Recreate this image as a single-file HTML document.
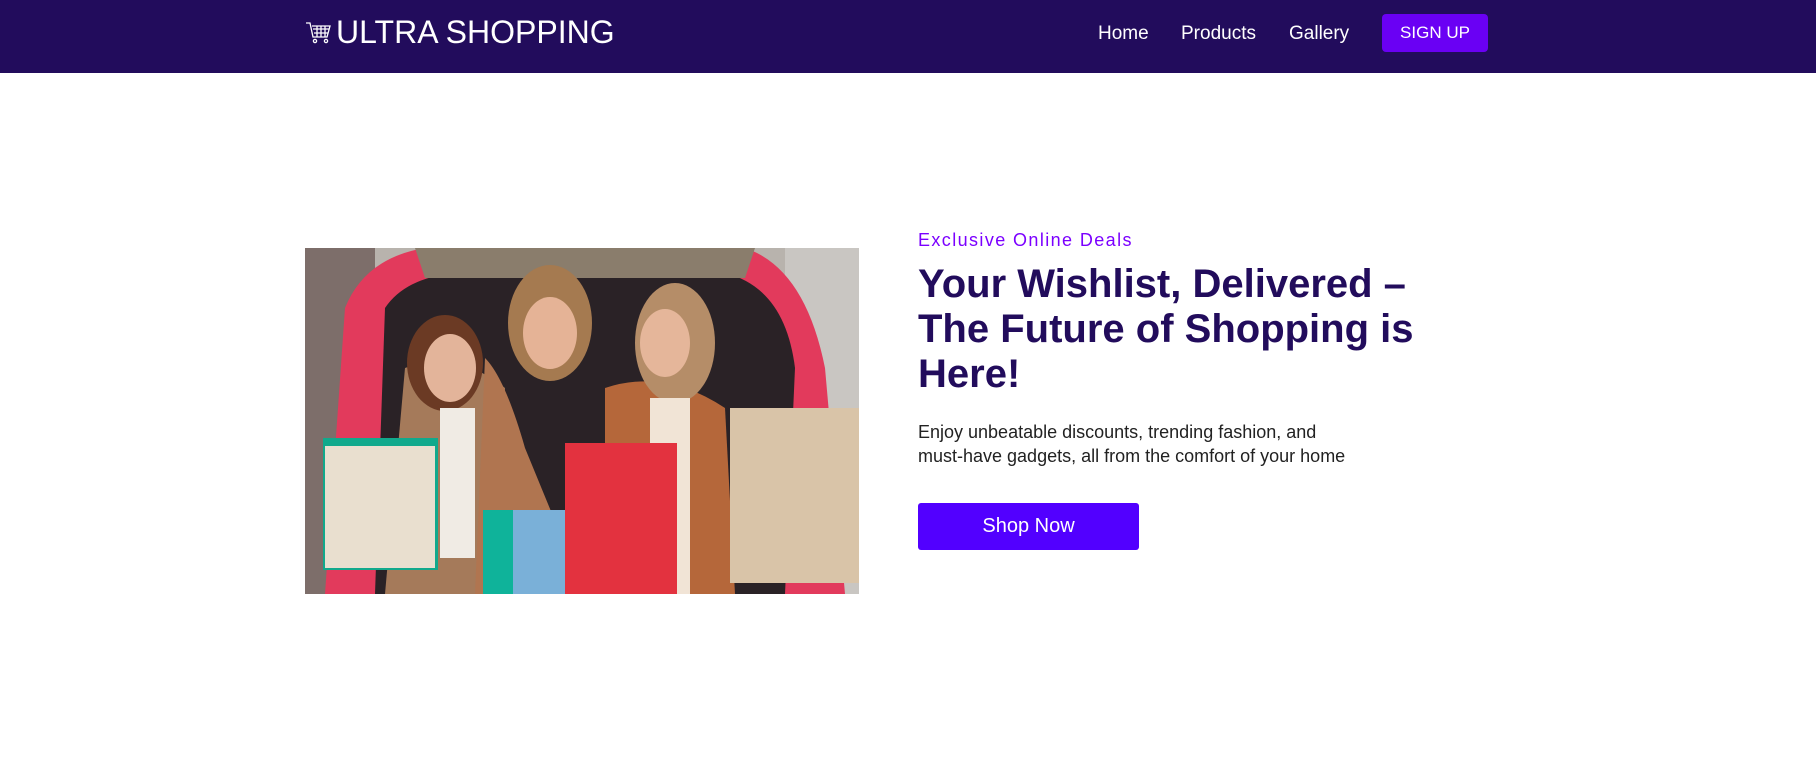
<!DOCTYPE html>
<html><head><meta charset="utf-8"><style>
*{margin:0;padding:0;box-sizing:border-box}
body{width:1816px;height:770px;background:#fff;font-family:"Liberation Sans",sans-serif;overflow:hidden;position:relative}
nav{position:absolute;left:0;top:0;width:1816px;height:73px;background:#220c5c}
.logo{position:absolute;left:305px;top:14px;color:#fff;font-size:32px;display:flex;align-items:center}
.links a{position:absolute;top:23px;color:#fff;font-size:19px;text-decoration:none}
.signup{position:absolute;left:1382px;top:14px;width:106px;height:38px;background:#6a00f4;border-radius:4px;color:#fff;font-size:17px;display:flex;align-items:center;justify-content:center}
.img{position:absolute;left:305px;top:248px;width:554px;height:346px}
.eyebrow{position:absolute;left:918px;top:230px;color:#7b00ff;font-size:18px;letter-spacing:1.4px}
h1{position:absolute;left:918px;top:262px;color:#220c5c;font-size:40px;line-height:45px;font-weight:bold;width:520px}
p{position:absolute;left:918px;top:420px;color:#222;font-size:18px;line-height:24px}
.btn{position:absolute;left:918px;top:503px;width:221px;height:47px;background:#5200ff;border-radius:3px;color:#fff;font-size:20px;display:flex;align-items:center;justify-content:center}
</style></head><body>
<nav>
<div class="logo"><svg width="28" height="24" viewBox="0 0 28 24" fill="none" stroke="#fff" stroke-width="1.3"><path d="M1 2h4l3 14h14l3-11H7"/><path d="M8 8h16M9 12h14M12 5v11M16 5v11M20 5v11"/><circle cx="10" cy="20" r="1.6"/><circle cx="21" cy="20" r="1.6"/></svg><span style="margin-left:3px">ULTRA SHOPPING</span></div>
<div class="links"><a style="left:1098px">Home</a><a style="left:1181px">Products</a><a style="left:1289px">Gallery</a></div>
<div class="signup">SIGN UP</div>
</nav>
<svg class="img" viewBox="0 0 554 346" preserveAspectRatio="none">
<rect width="554" height="346" fill="#b8b3ad"/>
<rect x="0" y="0" width="70" height="346" fill="#7d6e6a"/>
<rect x="480" y="0" width="74" height="346" fill="#c9c6c2"/>
<path d="M20 346 L40 60 Q60 10 120 0 L440 0 Q500 20 520 120 L540 346Z" fill="#e23a5c"/>
<path d="M70 346 L80 60 Q100 30 150 25 L420 25 Q480 40 490 120 L480 346Z" fill="#2a2226"/>
<path d="M110 0 L450 0 L440 30 L120 30Z" fill="#8a7d6c"/>
<path d="M100 120 Q150 100 200 140 L190 346 L80 346Z" fill="#a57a5a"/>
<ellipse cx="140" cy="115" rx="38" ry="48" fill="#6b3a24"/>
<ellipse cx="145" cy="120" rx="26" ry="34" fill="#e3b49a"/>
<path d="M180 110 Q200 130 220 200 L280 346 L170 346Z" fill="#b07550"/>
<ellipse cx="245" cy="75" rx="42" ry="58" fill="#a57a50"/>
<ellipse cx="245" cy="85" rx="27" ry="36" fill="#e5b396"/>
<path d="M300 140 Q360 120 420 160 L430 346 L300 346Z" fill="#b5673a"/>
<ellipse cx="370" cy="95" rx="40" ry="60" fill="#b58d68"/>
<ellipse cx="360" cy="95" rx="25" ry="34" fill="#e5b69a"/>
<rect x="345" y="150" width="40" height="196" fill="#f1e4d6"/>
<rect x="135" y="160" width="35" height="150" fill="#f0ebe4"/>
<rect x="18" y="190" width="115" height="132" fill="#11a98c"/>
<rect x="20" y="198" width="110" height="122" fill="#e9dfcf"/>
<rect x="178" y="262" width="30" height="84" fill="#0fb39a"/>
<rect x="208" y="262" width="78" height="84" fill="#7ab0d8"/>
<rect x="260" y="195" width="112" height="151" fill="#e3323f"/>
<rect x="425" y="160" width="129" height="175" fill="#d9c4a8"/>
</svg>
<div class="eyebrow">Exclusive Online Deals</div>
<h1>Your Wishlist, Delivered – The Future of Shopping is Here!</h1>
<p>Enjoy unbeatable discounts, trending fashion, and<br>must-have gadgets, all from the comfort of your home</p>
<div class="btn">Shop Now</div>
</body></html>
